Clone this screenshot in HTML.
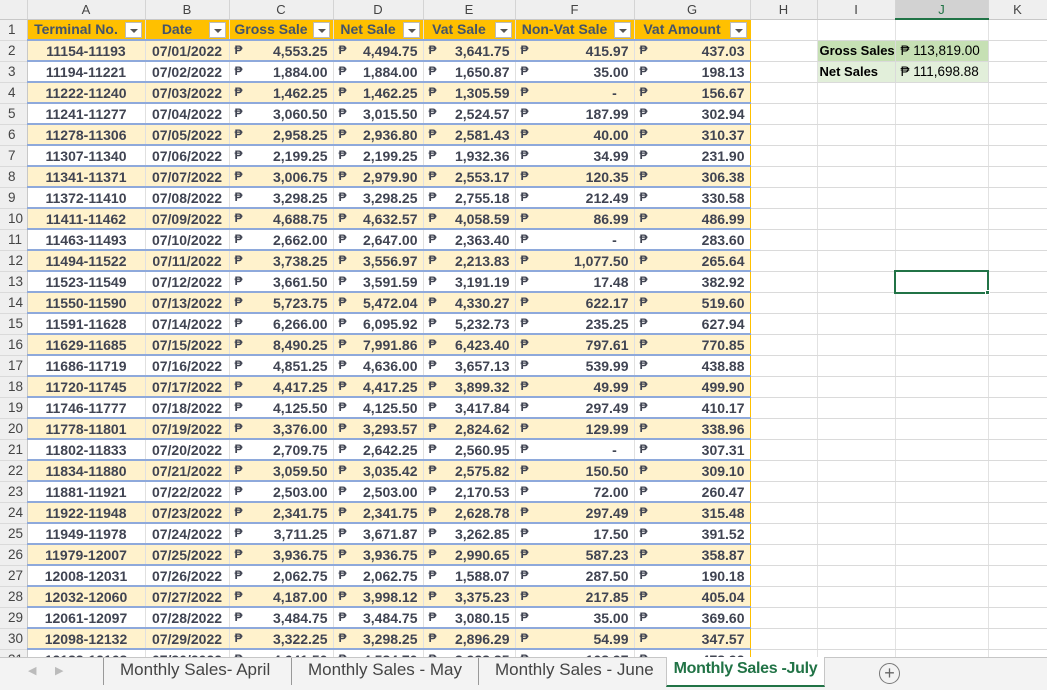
<!DOCTYPE html>
<html><head><meta charset="utf-8"><style>
*{margin:0;padding:0;box-sizing:border-box}
body{width:1047px;height:690px;overflow:hidden;background:#fff;font-family:"Liberation Sans","DejaVu Sans",sans-serif;position:relative}
table{border-collapse:collapse;table-layout:fixed;position:absolute;left:0;top:0;width:1047px}
td{height:21px;border-right:1px solid #dadada;border-bottom:1px solid #dadada;font-size:14px;white-space:nowrap;overflow:hidden;color:#404452;font-weight:bold;padding:0 5px}
tr.hd td{height:19px;background:#efefef;color:#444;font-weight:normal;text-align:center;font-size:13px;border-right:1px solid #d4d4d4;border-bottom:1px solid #c8c8c8}
td.rn{background:#efefef;color:#444;font-weight:normal;text-align:left;padding-left:8px;border-right:1px solid #c8c8c8;font-size:13.5px}
tr.t1 td.d{background:#ffc000;color:#44546a;text-align:center;position:relative;padding:0 22px 0 2px;text-overflow:clip}
tr.t1 td.d i{position:absolute;right:3px;top:2px;width:17px;height:16px;background:#fff;border:1px solid #bbb;font-style:normal}
tr.t1 td.d i:after{content:"";position:absolute;left:4px;top:6px;border-left:4px solid transparent;border-right:4px solid transparent;border-top:4px solid #555}
tr.y td.d{background:#fff2cc}
tr td.d{border-bottom:2px solid #8ea9db;border-right:1px solid #e0e0e0}
td.g{border-right:1px solid #ffc000 !important}
td.c{text-align:center}
td.e{border-right:1px solid #e2e2e2}
.tabs{position:absolute;left:0;top:657px;width:1047px;height:33px;background:#f3f3f3;border-top:1px solid #c6c6c6;font-size:17px;color:#444}
.tab{position:absolute;top:0;height:27px;line-height:24px;border-left:1px solid #999;padding:0 16px;white-space:nowrap}
</style></head><body>
<table>
<colgroup><col style="width:27px"><col style="width:118px"><col style="width:84px"><col style="width:104px"><col style="width:90px"><col style="width:92px"><col style="width:119px"><col style="width:116px"><col style="width:67px"><col style="width:78px"><col style="width:93px"><col style="width:59px"></colgroup>
<tr class="hd"><td></td><td>A</td><td>B</td><td>C</td><td>D</td><td>E</td><td>F</td><td>G</td><td>H</td><td>I</td><td style="background:#d2d2d2;border-bottom:2px solid #217346;color:#217346">J</td><td>K</td></tr>
<tr class="t1"><td class="rn">1</td><td class="d">Terminal No.<i></i></td><td class="d">Date<i></i></td><td class="d">Gross Sale<i></i></td><td class="d">Net Sale<i></i></td><td class="d">Vat Sale<i></i></td><td class="d">Non-Vat Sale<i></i></td><td class="d g">Vat Amount<i></i></td><td class="e"></td><td class="e"></td><td class="e"></td><td class="e"></td></tr>
<tbody id="b"></tbody>
</table>
<div style="position:absolute;left:894px;top:270px;width:95px;height:24px;border:2px solid #217346"></div>
<div style="position:absolute;left:985px;top:290px;width:5px;height:5px;background:#217346;border:1px solid #fff"></div>
<div class="tabs">
<span style="position:absolute;left:28px;top:6px;font-size:11px;color:#bbb">◀</span><span style="position:absolute;left:55px;top:6px;font-size:11px;color:#bbb">▶</span>
<div class="tab" style="left:103px">Monthly Sales- April</div>
<div class="tab" style="left:291px">Monthly Sales - May</div>
<div class="tab" style="left:478px">Monthly Sales - June</div>
<div style="position:absolute;left:666px;top:-1px;width:159px;height:30px;background:#fff;border:1px solid #c6c6c6;border-top:none;border-bottom:2px solid #217346;color:#217346;font-weight:bold;text-align:center;line-height:24px;white-space:nowrap;font-size:16px;letter-spacing:-0.3px">Monthly Sales -July</div>
<div style="position:absolute;left:879px;top:5px;width:21px;height:21px;border:1.5px solid #777;border-radius:50%;text-align:center;line-height:18px;font-size:18px;color:#666">+</div>
</div>
<script>
var d=[["11154-11193","07/01/2022","4,553.25","4,494.75","3,641.75","415.97","437.03"],
["11194-11221","07/02/2022","1,884.00","1,884.00","1,650.87","35.00","198.13"],
["11222-11240","07/03/2022","1,462.25","1,462.25","1,305.59","-","156.67"],
["11241-11277","07/04/2022","3,060.50","3,015.50","2,524.57","187.99","302.94"],
["11278-11306","07/05/2022","2,958.25","2,936.80","2,581.43","40.00","310.37"],
["11307-11340","07/06/2022","2,199.25","2,199.25","1,932.36","34.99","231.90"],
["11341-11371","07/07/2022","3,006.75","2,979.90","2,553.17","120.35","306.38"],
["11372-11410","07/08/2022","3,298.25","3,298.25","2,755.18","212.49","330.58"],
["11411-11462","07/09/2022","4,688.75","4,632.57","4,058.59","86.99","486.99"],
["11463-11493","07/10/2022","2,662.00","2,647.00","2,363.40","-","283.60"],
["11494-11522","07/11/2022","3,738.25","3,556.97","2,213.83","1,077.50","265.64"],
["11523-11549","07/12/2022","3,661.50","3,591.59","3,191.19","17.48","382.92"],
["11550-11590","07/13/2022","5,723.75","5,472.04","4,330.27","622.17","519.60"],
["11591-11628","07/14/2022","6,266.00","6,095.92","5,232.73","235.25","627.94"],
["11629-11685","07/15/2022","8,490.25","7,991.86","6,423.40","797.61","770.85"],
["11686-11719","07/16/2022","4,851.25","4,636.00","3,657.13","539.99","438.88"],
["11720-11745","07/17/2022","4,417.25","4,417.25","3,899.32","49.99","499.90"],
["11746-11777","07/18/2022","4,125.50","4,125.50","3,417.84","297.49","410.17"],
["11778-11801","07/19/2022","3,376.00","3,293.57","2,824.62","129.99","338.96"],
["11802-11833","07/20/2022","2,709.75","2,642.25","2,560.95","-","307.31"],
["11834-11880","07/21/2022","3,059.50","3,035.42","2,575.82","150.50","309.10"],
["11881-11921","07/22/2022","2,503.00","2,503.00","2,170.53","72.00","260.47"],
["11922-11948","07/23/2022","2,341.75","2,341.75","2,628.78","297.49","315.48"],
["11949-11978","07/24/2022","3,711.25","3,671.87","3,262.85","17.50","391.52"],
["11979-12007","07/25/2022","3,936.75","3,936.75","2,990.65","587.23","358.87"],
["12008-12031","07/26/2022","2,062.75","2,062.75","1,588.07","287.50","190.18"],
["12032-12060","07/27/2022","4,187.00","3,998.12","3,375.23","217.85","405.04"],
["12061-12097","07/28/2022","3,484.75","3,484.75","3,080.15","35.00","369.60"],
["12098-12132","07/29/2022","3,322.25","3,298.25","2,896.29","54.99","347.57"],
["12133-12168","07/30/2022","4,641.50","4,584.70","3,933.85","108.97","478.92"]];
var h="";
d.forEach(function(r,i){var n=i+2,y=i%2==0?"y":"";
h+='<tr class="'+y+'"><td class="rn">'+n+'</td><td class="d c">'+r[0]+'</td><td class="d c">'+r[1]+'</td>';
for(var k=2;k<7;k++){var v=r[k];h+='<td class="d'+(k==6?' g':'')+'"><div style="display:flex;justify-content:space-between"><span style="font-size:12px">₱</span><span>'+(v=="-"?"-&nbsp;&nbsp;&nbsp;":v)+'</span></div></td>';}
var I="";
if(n==2){I='<td style="background:#c6e0b4;color:#000;padding:0 2px;font-size:13px">Gross Sales</td><td style="background:#c6e0b4;color:#000;font-weight:normal;font-size:13.5px">₱ 113,819.00</td>';}
else if(n==3){I='<td style="background:#e2efda;color:#000;padding:0 2px;font-size:13px">Net Sales</td><td style="background:#e2efda;color:#000;font-weight:normal;font-size:13.5px">₱ 111,698.88</td>';}
else I='<td class="e"></td><td class="e"></td>';
h+='<td class="e"></td>'+I+'<td class="e"></td></tr>';});
document.getElementById("b").innerHTML=h;
</script>
</body></html>
